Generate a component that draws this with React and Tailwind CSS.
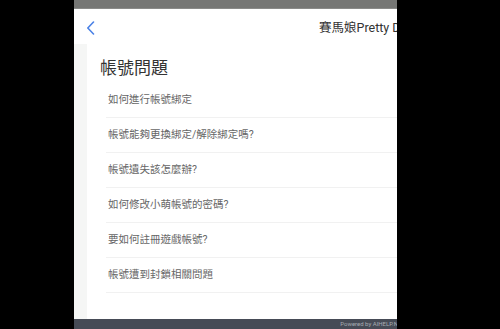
const questions = [
  "如何進行帳號綁定",
  "帳號能夠更換綁定/解除綁定嗎?",
  "帳號遺失該怎麼辦?",
  "如何修改小萌帳號的密碼?",
  "要如何註冊遊戲帳號?",
  "帳號遭到封鎖相關問題",
];

export default function App() {
  return (
    <div className="w-[500px] h-[329px] bg-black pl-[74px] font-['Roboto','Noto_Sans_CJK_TC',sans-serif]">
      <div className="w-[323px] h-full flex flex-col overflow-hidden">
        {/* status bar */}
        <div className="h-[9px] bg-[#767775] border-b border-[#8a8b89]"></div>

        {/* header */}
        <div className="h-[35px] bg-white flex items-center pt-[3px] pl-[12px] whitespace-nowrap">
          <svg width="9" height="14" viewBox="0 0 9 14" className="shrink-0">
            <path d="M7.5 1 L1.8 7 L7.5 13" fill="none" stroke="#4b82e6" strokeWidth="1.6" strokeLinecap="round" strokeLinejoin="round" />
          </svg>
          <span className="ml-[224px] text-[12.5px] text-[#333]">賽馬娘Pretty Derby</span>
        </div>

        {/* content */}
        <div className="flex-1 bg-[#f5f6f5] pl-[13px] flex">
          <div className="flex-1 bg-white pt-[12px]">
            <h1 className="ml-[13px] text-[17px] leading-[24px] text-[#333]">帳號問題</h1>
            <ul className="ml-[19px] mt-[3px]">
              {questions.map((q, i) => (
                <li
                  key={i}
                  className="h-[35px] flex items-center pl-[2px] border-b border-[#f1f1f1] text-[10.5px] text-[#666] whitespace-nowrap"
                >
                  {q}
                </li>
              ))}
            </ul>
          </div>
        </div>

        {/* footer */}
        <div className="h-[10px] bg-[#464b56] flex items-center justify-end overflow-hidden whitespace-nowrap">
          <span className="text-[6px] leading-none text-[#a7abb3] -mr-[8px]">Powered by AIHELP.NET</span>
        </div>
      </div>
    </div>
  );
}
